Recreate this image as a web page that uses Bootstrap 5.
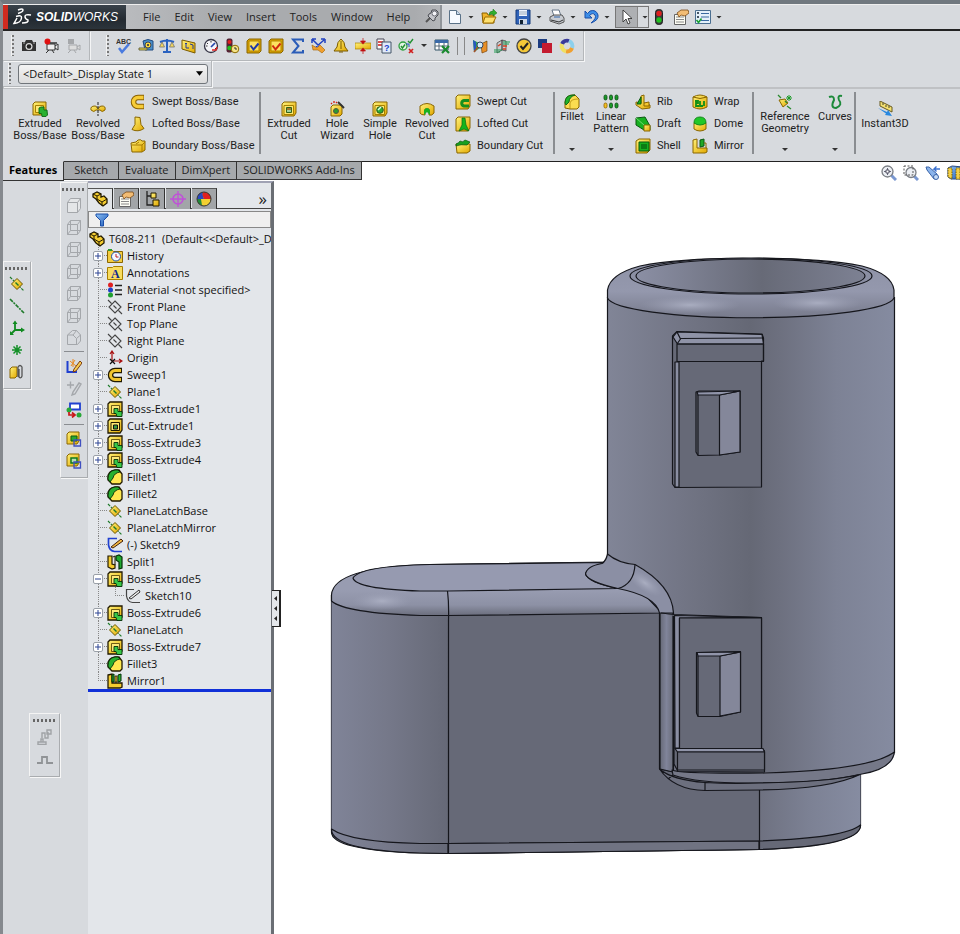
<!DOCTYPE html>
<html lang="en">
<head>
<meta charset="utf-8">
<meta name="viewport" content="width=device-width, initial-scale=1">
<title>SOLIDWORKS - T608-211</title>
<link href="https://cdn.jsdelivr.net/npm/bootstrap@5.3.0/dist/css/bootstrap.min.css" rel="stylesheet">
<style>
:root{--chrome:#d7dade;--tree:#e3e6ea;--edge:#6a6e74}
body{font-family:"Open Sans","Noto Sans",sans-serif;font-size:11px;line-height:12px;color:#222;background:var(--chrome)}
.app{border-left:3px solid #85898e;border-top:4px solid #70787f}
button{font:inherit;color:inherit;background:none;border:0;padding:0}
.ico{width:16px;height:16px;flex:none;display:block}
.caret{width:6px;height:3px;flex:none;display:block;background:#333;clip-path:polygon(0 0,100% 0,50% 100%)}
/* menu bar */
.menubar{height:27px;border-bottom:2px solid #222;border-top:1px solid #eee}
.brandbox{width:123px;border-left:5px solid #cf2b20;background:linear-gradient(#39424a,#232a31 60%,#2c343b);color:#fff;padding-left:4px;gap:4px}
.brandname{font:italic 12px "Liberation Sans",sans-serif}
.menus{width:316px;background:linear-gradient(90deg,#b9bbbe,#a9abae 30%,#a9abae 92%,#b4b6b9);padding-left:17px;gap:14px;border-right:2px solid #90959a}
.menus a{color:#222;text-decoration:none}
.quick{padding-left:5px;gap:7px}
.pair{width:27px;gap:5px}
.pick{border:1px solid #777;height:22px;width:34px;margin:0 -5px 0 -2px}
.pick .on{background:#aeb0b3;width:22px;height:20px;border-right:1px solid #888;padding-left:3px}
.quick2{gap:6px}
/* toolbars */
.strip1{height:30px}
.dock{border-right:1px solid #b4b7ba;border-bottom:1px solid #b4b7ba;box-shadow:1px 1px 0 #f4f5f6;gap:7px}
.grip{width:3px;height:21px;flex:none;background:repeating-linear-gradient(#777 0 2px,transparent 2px 4px);border-left:1px solid #f2f2f2}
.griph{width:24px;height:3px;flex:none;background:repeating-linear-gradient(90deg,#666 0 2px,transparent 2px 4px)}
.dock-a{width:87px;padding-left:8px}
.dock-b{width:494px;padding-left:16px}
.dock-c{width:209px;padding-left:5px}
.set-a{width:60px}.set-b{width:298px}.set-c{width:103px}
.vrs{gap:6px}
.vr1{width:1px;background:#888;height:18px}
.strip2{height:28px;border-bottom:2px solid #bfc1c4}
.state{width:190px;height:20px;font-size:11px;line-height:12px;padding:0 20px 0 4px;border:1px solid #70757a;border-radius:3px;appearance:none;color:#111;
 background:url("data:image/svg+xml,%3Csvg xmlns='http://www.w3.org/2000/svg' viewBox='0 0 8 5'%3E%3Cpath d='M0 0h8L4 5z'/%3E%3C/svg%3E") no-repeat right 4px center/7px 5px,linear-gradient(#f4f4f4,#dcdcdc)}
/* ribbon */
.ribbon{height:72px;padding:2px 0 0 8px;font-family:Roboto,"Open Sans",sans-serif}
.big{display:flex;flex-direction:column;align-items:center;text-align:center;height:66px;padding-top:10px;gap:1px;flex:none}
.big.hi{padding-top:3px}
.big .caret{margin-top:auto;margin-bottom:6px}
.w58{width:58px}.w48{width:48px}.w38{width:38px}.w56{width:56px}.w34{width:34px}.w44{width:44px}.w62{width:62px}
.smalls{flex:none}
.sm-boss{width:132px;padding-left:3px}.sm-cut{width:98px}.sm-a{width:58px;padding-left:2px}.sm-b{width:61px;padding-left:1px}
.smalls button{display:flex;align-items:center;height:22px;gap:6px;white-space:nowrap;text-align:left}
.rule{width:2px;height:62px;background:#8a8d91;flex:none;margin:1px 4px 0 0}
/* command tabs */
.cmdrow{height:20px;background:#fff;box-shadow:inset 0 1px 0 #222}
.cmd{height:19px;border:1px solid #333;border-left:0;background:#a6a9ac;padding:0 6px 2px;white-space:nowrap}
.cmd.wide{padding:0 10px 2px}
.cmd.active{background:var(--chrome);border-top-color:var(--chrome);font-weight:700;color:#000;height:20px}
.headsup{gap:6px;overflow:hidden;padding-top:4px}
/* work area */
.side{width:85px;flex:none}
.side1{width:57px}
.float{background:var(--chrome);border:1px solid #a9acaf;border-left-color:#f4f4f4;border-top-color:#f4f4f4;box-shadow:1px 1px 0 #f6f6f6;display:flex;flex-direction:column;align-items:center;padding-top:5px}
.f1{width:28px;height:128px;margin-top:80px;gap:6px}
.f2{width:28px;height:296px;gap:6px;margin-top:1px}
.f3{width:31px;height:64px;margin-top:324px;gap:7px}
.hr1{width:20px;height:1px;background:#8a8d91}
.treepane{width:186px;flex:none;background:var(--tree);border-right:3px solid var(--edge);border-top:2px solid #a0a2b4;padding-top:5px}
.mtabs button{width:25px;height:21px;background:#a2a5a8;border-right:1px solid #333;border-top:1px solid #555;display:flex;justify-content:center;align-items:center;margin-right:1px}
.mtabs button.on{background:var(--tree)}
.mtabs{box-shadow:inset 0 -1px 0 #444}
.more{font-size:17px}
.filter{height:17px;background:#efefef;border:1px solid #888;margin:2px 0;padding-left:5px}
.filter input{border:0;background:none;min-width:0;height:13px;outline:0;font-size:11px}
.tree{list-style:none;margin:0;padding:0}
.tree li,.rootrow{display:flex;align-items:center;height:17px;white-space:nowrap;color:#111;gap:4px;font-size:11px}
.rootrow{overflow:hidden;padding-left:1px}
.stem{width:19px;height:17px;flex:none;display:flex;align-items:center;padding-left:5px;margin-right:-4px;
 background:repeating-linear-gradient(#888 0 1px,transparent 1px 2px) 10px 0/1px 17px no-repeat,repeating-linear-gradient(90deg,#888 0 1px,transparent 1px 2px) 10px 8px/9px 1px no-repeat}
.stem.end{background-size:1px 9px,9px 1px}
.stem.pass{background-size:1px 17px,0 0}
.stem.deep{width:18px;padding:0;background-position:8px 0,8px 8px;background-size:1px 9px,10px 1px}
.exp{width:10px;height:10px;display:block;background:#fff;border:1px solid #9aa0a8;border-radius:2px;padding:0}
.exp svg{display:block;width:8px;height:8px}
.rollback{height:3px;background:#1030d8}
.viewport{background:#fff;min-width:0}
.flyout{width:9px;height:37px;margin:409px 0 0 -2px;border:1px solid #222;border-width:1px 2px 1px 0;background:var(--tree);display:flex;flex-direction:column;justify-content:space-evenly;align-items:center;flex:none}
.flyout i{width:3px;height:5px;background:#222;clip-path:polygon(100% 0,100% 100%,0 50%)}
.model{width:calc(100% + 7px);margin-left:-7px;min-width:0;display:block;align-self:flex-start;height:auto}
</style>
<script src="https://cdn.jsdelivr.net/npm/bootstrap@5.3.0/dist/js/bootstrap.bundle.min.js"></script>
</head>
<body>
<svg width="0" height="0" class="visually-hidden" aria-hidden="true">
<defs>
<linearGradient id="gy" x2="1" y2="1"><stop stop-color="#fff27a"/><stop offset="1" stop-color="#e2a800"/></linearGradient>
<linearGradient id="gb" x2="1" y2="1"><stop stop-color="#8cc0f4"/><stop offset="1" stop-color="#1c58b8"/></linearGradient>
</defs>
<symbol id="camera" viewBox="0 0 16 16"><path d="M1 4h3l1-2h6l1 2h3v9H1z" fill="#333"/><circle cx="8" cy="8.500" r="3.500" fill="#ddd"/><circle cx="8" cy="8.500" r="2.300" fill="#222"/><path d="M2 5h2M12 5h2" stroke="#aaa"/></symbol>
<symbol id="rec" viewBox="0 0 16 16"><path d="M4 6h8v6H4zM12 8l3-2v6l-3-2M6 12l-3 3M9 12l2 3" fill="#eee" stroke="#333"/><circle cx="4.500" cy="3.500" r="3" fill="#e01010"/><path d="M7 5h7" stroke="#333" stroke-width="1.500"/></symbol>
<symbol id="recoff" viewBox="0 0 16 16"><path d="M4 7h8v5H4zM12 9l3-2v5l-3-2M6 12l-3 3M9 12l2 3" fill="#ddd" stroke="#a5a7aa"/><path d="M3 1h6v5H3z" fill="#a5a7aa"/></symbol>
<symbol id="spell" viewBox="0 0 16 16"><text x="0" y="6" font-size="7" font-weight="700" font-family="Liberation Sans" fill="#333">ABC</text><path d="M3 10l3 4 7-8" fill="none" stroke="#4a7be0" stroke-width="2.500"/></symbol>
<symbol id="tape" viewBox="0 0 16 16"><path d="M5 3q5-3 10 0v9H7z" fill="#4890cc" stroke="#224a80"/><circle cx="10" cy="7" r="3" fill="#f8dc40" stroke="#445"/><circle cx="10" cy="7" r="1" fill="#225"/><path d="M1 10h8v2H1z" fill="#f8dc40" stroke="#664"/></symbol>
<symbol id="scale" viewBox="0 0 16 16"><path d="M8 1v12M1 4q7-3 14 0M4 14h8" stroke="#2a62c0" stroke-width="2" fill="none"/><path d="M3 4L0.500 9h5zM13 4l-2.500 5h5z" fill="#f5d860" stroke="#666" stroke-width=".7"/></symbol>
<symbol id="secprop" viewBox="0 0 16 16"><path d="M1 2l13 3v10L1 11z" fill="url(#gy)" stroke="#7a5a00"/><path d="M5 5v5h3M9 6l3 1v4M4 6l1-1 1 1" fill="none" stroke="#223a9c"/></symbol>
<symbol id="gauge" viewBox="0 0 16 16"><circle cx="8" cy="8" r="6.500" fill="#f4f4f8" stroke="#334" stroke-width="1.300"/><path d="M8 9l4-4" stroke="#24a" stroke-width="1.700"/><path d="M4 5l1 1M8 3v1.500M3 8h1.500M12 10l1 1" stroke="#333"/><path d="M9 12h4l1-3" stroke="#d22" fill="none" stroke-width="1.500"/></symbol>
<symbol id="traffic" viewBox="0 0 16 16"><rect x="4.500" y=".5" width="7" height="15" rx="3" fill="#3a3a3a" stroke="#222"/><circle cx="8" cy="4.500" r="2.700" fill="#e02020"/><circle cx="8" cy="11" r="2.700" fill="#20c020"/></symbol>
<symbol id="traffic2" viewBox="0 0 16 16"><rect x="2.500" y=".5" width="6" height="14" rx="2" fill="#523"/><circle cx="5.500" cy="4" r="2" fill="#e02020"/><circle cx="5.500" cy="10" r="2.300" fill="#20c020"/><circle cx="11" cy="11" r="3.800" fill="#f6e48a" stroke="#8a6a00"/><path d="M11 9v2h2" stroke="#333" fill="none"/></symbol>
<symbol id="ckblue" viewBox="0 0 16 16"><path d="M1 3l2-2h12v12l-2 2H1z" fill="#d8a000" stroke="#8a6600"/><path d="M3 3h10v10H3z" fill="#fde060" stroke="#b58800"/><path d="M4.500 7.500l3 4 5-6" fill="none" stroke="#223aa8" stroke-width="2"/></symbol>
<symbol id="ckred" viewBox="0 0 16 16"><path d="M1 3l2-2h12v12l-2 2H1z" fill="#d8a000" stroke="#8a6600"/><path d="M3 3h10v10H3z" fill="#fde060" stroke="#b58800"/><path d="M4.500 7.500l3 4 5-6" fill="none" stroke="#d02810" stroke-width="2"/></symbol>
<symbol id="sigma" viewBox="0 0 16 16"><path d="M13 4V1.500H3L8.500 8 3 14.500h10V12" fill="none" stroke="#2a5cb8" stroke-width="2"/></symbol>
<symbol id="symchk" viewBox="0 0 16 16"><path d="M2 2l10 10M13 2L5 9M1 1h4M1 1v4M14 1h-4M14 1v4" stroke="#2040c0" stroke-width="1.500" fill="none"/><path d="M1 7l5 3 3-3 5 5-3 3-4-3H2z" fill="#f0a030" stroke="#a06000" stroke-width=".6"/></symbol>
<symbol id="bell" viewBox="0 0 16 16"><path d="M8 1q4 3 4 8l3 4H1l3-4q0-5 4-8z" fill="url(#gy)" stroke="#7a5a00"/><path d="M6 14h4M8 3v8" stroke="#7a5a00"/></symbol>
<symbol id="thick" viewBox="0 0 16 16"><path d="M0 5h6l2 1 2-1h6v6h-6l-2-1-2 1H0z" fill="url(#gy)" stroke="#a88000" stroke-width=".7"/><path d="M8 0v3M5.500 3h5L8 6zM8 16v-3M5.500 13h5L8 10z" fill="#c01010" stroke="#c01010" stroke-width=".7"/></symbol>
<symbol id="cmpdoc" viewBox="0 0 16 16"><path d="M1 1h7v10H1z" fill="#fff" stroke="#445"/><path d="M2 4h5M2 7h5" stroke="#d01818" stroke-width="1.500"/><path d="M8 4h7v11H6V4z" fill="#e0eafa" stroke="#456"/><text x="8" y="13" font-size="9" font-weight="700" font-family="Liberation Sans" fill="#24c">?</text></symbol>
<symbol id="gears" viewBox="0 0 16 16"><circle cx="5" cy="8" r="4" fill="#e4f4e4" stroke="#30a040" stroke-width="1.300"/><path d="M3 8l1.500 2L7 6.500M10 3l2 2 3-4" fill="none" stroke="#209030" stroke-width="1.400"/><path d="M11 11l4 4M15 11l-4 4" stroke="#d02020" stroke-width="1.700"/><path d="M8 6h3v3" stroke="#2850c0" fill="none"/></symbol>
<symbol id="table" viewBox="0 0 16 16"><path d="M1 2h13v10H1z" fill="#fff" stroke="#356"/><path d="M1 2h13v3H1z" fill="#3a6aa8"/><path d="M1 8h13M5 5v7M10 5v7" stroke="#567"/><path d="M8 8l7 7M15 8l-7 7" stroke="#1a8a30" stroke-width="2.200"/></symbol>
<symbol id="simx" viewBox="0 0 16 16"><path d="M1 2l8 4 6-3v9l-7-2-6 4z" fill="#30a850"/><path d="M1 2l3 2v9l-2 1z" fill="#2858c0"/><path d="M9 6l6-3v10l-5 2z" fill="#e89028" stroke="#6a3800" stroke-width=".6"/><circle cx="8" cy="7" r="3" fill="#cfeaf8" stroke="#346"/><path d="M6 9l-4 5" stroke="#a52" stroke-width="1.500"/></symbol>
<symbol id="flow" viewBox="0 0 16 16"><path d="M3 5l5-3v10l-5 3zM8 2l4 1v10l-4-1z" fill="#c8ccd0" stroke="#333" stroke-width=".7"/><path d="M0 12h8M0 14h6M9 4h7M9 6h6" stroke="#1e9c50"/><path d="M4 8l3-2M9 8h4M9 11h3" stroke="#d84020" stroke-width="1.500"/></symbol>
<symbol id="yclock" viewBox="0 0 16 16"><circle cx="8" cy="8" r="7" fill="#f4c838" stroke="#444" stroke-width="1.300"/><path d="M4.500 8l2.500 3 5-6" fill="none" stroke="#222" stroke-width="2"/></symbol>
<symbol id="squares" viewBox="0 0 16 16"><path d="M1 1h9v9H1z" fill="#1c3c80"/><path d="M5 5h10v10H5z" fill="#c41c30"/></symbol>
<symbol id="ring" viewBox="0 0 16 16"><g fill="none" stroke-width="4"><path d="M3 6a5.500 5.500 0 0 1 7-3" stroke="#3a3a9a"/><path d="M10 3a5.500 5.500 0 0 1 3 7" stroke="#8cd0ec"/><path d="M13 10a5.500 5.500 0 0 1-6 3.300" stroke="#f0a030"/><path d="M7 13.300A5.500 5.500 0 0 1 3 6" stroke="#f0e060"/></g></symbol>
<symbol id="pin" viewBox="0 0 16 16"><path d="M2 13l4-4" stroke="#555" stroke-width="2"/><path d="M4 7l5 5 2-1v-2l3-3V3l-2-2H8L7 4 5 5z" fill="#c4c5ca" stroke="#4a4c52"/><circle cx="10.500" cy="4.500" r="2.500" fill="#f2f2f6" stroke="#6a6c74"/></symbol>
<symbol id="newdoc" viewBox="0 0 16 16"><path d="M2.500 1.500h7l4 4v9h-11z" fill="#f6faff" stroke="#5a7288"/><path d="M9.500 1.500v4h4" fill="#c8daee" stroke="#5a7288"/></symbol>
<symbol id="open" viewBox="0 0 16 16"><path d="M1 4h5l1 2h6v8H2z" fill="#f0b428" stroke="#8a6000"/><path d="M4 8h11l-3 6H2z" fill="#fde070" stroke="#a07000"/><path d="M8 6q0-4 4-4V0l4 4-4 3V5q-2 0-4 1z" fill="#30b030" stroke="#187018" stroke-width=".5"/></symbol>
<symbol id="save" viewBox="0 0 16 16"><path d="M1 1h14v14H1z" fill="#2f62b8" stroke="#153a7a"/><path d="M4 1h8v6H4z" fill="#eef4ff"/><path d="M4 3h8M4 5h8" stroke="#9ab"/><path d="M4 10h8v5H4z" fill="#cdd8e8"/><path d="M5 11h3v4H5z" fill="#123"/></symbol>
<symbol id="print" viewBox="0 0 16 16"><path d="M3 1h7l2 6H5z" fill="#fff" stroke="#678"/><path d="M1 8l4-2h8l2 3v4l-5 2-9-3z" fill="#c8ccd2" stroke="#555"/><path d="M2 11l8 2 4-2" fill="none" stroke="#333"/><path d="M5 8h6" stroke="#36a"/></symbol>
<symbol id="undo" viewBox="0 0 16 16"><path d="M2 2v7h7L6.500 6.500Q10 3 12 6t-4 8q8-3 7-8-2-6-8-4L4.500 4.500z" fill="#3c8ee8" stroke="#1a4ea8"/></symbol>
<symbol id="cursor" viewBox="0 0 16 16"><path d="M4 1v12l3-3 2 5 2-1-2-4.500h4z" fill="#fff" stroke="#333" stroke-width=".9"/></symbol>
<symbol id="props" viewBox="0 0 16 16"><path d="M1.500 5.500h11v10h-11z" fill="#fdfdf4" stroke="#666"/><path d="M3 8h8M3 10.500h8M3 13h8" stroke="#8a8a8a"/><path d="M4 4l4-3h7l1 3-4 3-4-1-2 2z" fill="#f2bc74" stroke="#7a4a18" stroke-width=".8"/></symbol>
<symbol id="opts" viewBox="0 0 16 16"><path d="M.5 1.500h15v13H.5z" fill="#e4f0fa" stroke="#4a6e90"/><path d="M6 4.500h8M6 8h8M6 11.500h8" stroke="#3a6aa0"/><path d="M2 4h2M2 8h2" stroke="#456" stroke-width="2"/><path d="M1.500 11l2 2.500 3-4" fill="none" stroke="#18a030" stroke-width="1.600"/></symbol>
<symbol id="extr" viewBox="0 0 16 16"><path d="M1 3l2-2h11v10l-2 3H1z" fill="url(#gy)" stroke="#8a6600"/><path d="M3.500 4.500h8v7h-8z" fill="#fbe878" stroke="#a88000"/><path d="M7 7l2-1h3v3h3l.500 5-1.500 1.500h-4l-.5-3H7z" fill="#28b030" stroke="#0c6414" stroke-width=".9"/></symbol>
<symbol id="textr" viewBox="0 0 16 16"><path d="M1 3l2-2h12v11l-2 3H1z" fill="url(#gy)" stroke="#221a00" stroke-width="1.300"/><path d="M4.500 4.500h8v8h-8z" fill="#fbe878" stroke="#4a3a00" stroke-width=".8"/><path d="M7 7.500h4v3h4v5h-5l-1-3H7z" fill="#38c848" stroke="#053008" stroke-width=".9"/></symbol>
<symbol id="cutx" viewBox="0 0 16 16"><path d="M1 3l2-2h12v11l-2 3H1z" fill="url(#gy)" stroke="#8a6600"/><path d="M3 4.500h9.500v9H3z" fill="#fde870" stroke="#a88000"/><path d="M5.500 6.500h5v5h-5z" fill="#a07828" stroke="#30641c"/><path d="M6 9h4v2H6z" fill="#9fcf9a"/></symbol>
<symbol id="tcut" viewBox="0 0 16 16"><path d="M1 3l2-2h12v11l-2 3H1z" fill="url(#gy)" stroke="#221a00" stroke-width="1.300"/><path d="M4 4.500h8.500v8H4z" fill="#fde870" stroke="#221a00"/><path d="M6.500 7h4v4h-4z" fill="#3a9a40" stroke="#111"/></symbol>
<symbol id="revb" viewBox="0 0 16 16"><path d="M1 9q-1-4 4-4 2 0 2 2h2q0-2 3-2 4 0 3 4-3 3-5 0H6Q4 12 1 9z" fill="url(#gy)" stroke="#8a6600"/><path d="M8 1v14" stroke="#222" stroke-dasharray="3 1"/></symbol>
<symbol id="swept" viewBox="0 0 16 16"><path d="M14 3.500H8a4.500 4.500 0 0 0 0 9h6" fill="none" stroke="#8a6000" stroke-width="5.500"/><path d="M13.500 3.500H8a4.500 4.500 0 0 0 0 9h5.500" fill="none" stroke="#f6cc38" stroke-width="3.500"/></symbol>
<symbol id="tsweep" viewBox="0 0 16 16"><path d="M15 3.500H8a4.500 4.500 0 0 0 0 9h7" fill="none" stroke="#221a00" stroke-width="5.500"/><path d="M14 3.500H8a4.500 4.500 0 0 0 0 9h6" fill="none" stroke="#f0c430" stroke-width="3"/></symbol>
<symbol id="loft" viewBox="0 0 16 16"><path d="M5 1l5 .500 1 7 3 4q-6 4-12 1l3-5z" fill="url(#gy)" stroke="#8a6600"/></symbol>
<symbol id="bound" viewBox="0 0 16 16"><path d="M1 5l5-1 2-2q3-1 4 1h3v9l-3 2H2z" fill="url(#gy)" stroke="#8a6600"/><path d="M2 7h10v7M12 7l3-3M6 6l3-2" fill="none" stroke="#a87c00"/></symbol>
<symbol id="wiz" viewBox="0 0 16 16"><path d="M2 6l2-2h9v9l-2 2H2z" fill="url(#gy)" stroke="#8a6600"/><circle cx="7" cy="10" r="2.500" fill="#2a9a30" stroke="#554"/><path d="M9 1l6 6" stroke="#333" stroke-width="2"/><path d="M2 2l1 1M5 0v2M7 2l1-1" stroke="#d82010" stroke-width="1.300"/></symbol>
<symbol id="hole" viewBox="0 0 16 16"><path d="M1 3l2-2h12v11l-2 3H1z" fill="url(#gy)" stroke="#8a6600"/><path d="M3 4.500h9.500v9H3z" fill="#fde870" stroke="#a88000"/><circle cx="8" cy="9" r="3.300" fill="#2cae34" stroke="#2a5a20"/><path d="M6 9l3-3" stroke="#dfe" stroke-width="1.500"/></symbol>
<symbol id="revc" viewBox="0 0 16 16"><path d="M1 5q7-5 14 0v7q-2 3-5 2V8H6v6q-4 0-5-2z" fill="url(#gy)" stroke="#8a6600"/><path d="M5 14V9q3-4 6 0v5l-3-3z" fill="#18b020"/></symbol>
<symbol id="swc" viewBox="0 0 16 16"><path d="M1 3l2-2h12v11l-2 3H1z" fill="url(#gy)" stroke="#8a6600"/><path d="M14 6.500H9a2.800 2.800 0 0 0 0 5.500h5" fill="none" stroke="#16901e" stroke-width="3"/></symbol>
<symbol id="loc" viewBox="0 0 16 16"><path d="M1 3l2-2h12v11l-2 3H1z" fill="url(#gy)" stroke="#8a6600"/><path d="M7 2h3l1 7 3 6-5-2-5 2 3-6z" fill="#14b41c" stroke="#086a10" stroke-width=".7"/></symbol>
<symbol id="boc" viewBox="0 0 16 16"><path d="M1 6h14v7l-3 2H2z" fill="url(#gy)" stroke="#8a6600"/><path d="M1 6q3-1 4-3 3 2 5-1l5 2-3 3q-6-1-11 1z" fill="#18a020" stroke="#0c5a10" stroke-width=".7"/></symbol>
<symbol id="fil" viewBox="0 0 16 16"><path d="M1 14V8Q2 1 9 1h2l4 4v8l-2 2H6z" fill="#fbdc50" stroke="#8a6600"/><path d="M1 9Q1 1 9 1h2q-6 2-6 7l-3 3z" fill="#20b428" stroke="#126818"/><path d="M6 9v6M6 9q1-4 8-4" fill="none" stroke="#a88000" stroke-width=".7"/></symbol>
<symbol id="tfil" viewBox="0 0 16 16"><path d="M1 11Q0 2 8 1h4l3 4v8l-2 2H5z" fill="#ffe850" stroke="#221a00" stroke-width="1.300"/><path d="M1 10Q1 2 8 1h3l2 2q-6 1-7 6l-3 4z" fill="#28b030" stroke="#053008" stroke-width=".9"/></symbol>
<symbol id="lin" viewBox="0 0 16 16"><g fill="#1a9a28" stroke="#0d4a14" stroke-width=".8"><rect x="1" y="1" width="3" height="5" rx="1.500"/><rect x="6.500" y="1" width="3" height="5" rx="1.500"/><rect x="12" y="1" width="3" height="5" rx="1.500"/><rect x="6.500" y="9" width="3" height="5" rx="1.500"/><rect x="12" y="9" width="3" height="5" rx="1.500"/></g><rect x="1" y="9" width="3" height="5" rx="1.500" fill="#f4c020" stroke="#8a6000" stroke-width=".8"/></symbol>
<symbol id="rib" viewBox="0 0 16 16"><path d="M6 2l3-1v8l6 2v3l-8 1-6-4v-3l5 1z" fill="url(#gy)" stroke="#8a6600"/><path d="M6 3v7H2z" fill="#18b020" stroke="#0a5a10"/><path d="M9 9l5-1v4H9z" fill="#f6c830" stroke="#8a6600"/></symbol>
<symbol id="draft" viewBox="0 0 16 16"><path d="M1 2l9-1 5 9v4H9L1 9z" fill="#18b020" stroke="#0a5a10"/><path d="M9 9h6v6H9z" fill="url(#gy)" stroke="#8a6600"/><path d="M1 2l8 7" stroke="#6fdc70"/></symbol>
<symbol id="shell" viewBox="0 0 16 16"><path d="M1 3l3-2h11v11l-3 3H1z" fill="url(#gy)" stroke="#8a6600"/><path d="M4 4h10v9H4z" fill="#18b020" stroke="#0a5a10"/><path d="M6 6h6v5H6z" fill="#0c7c14"/></symbol>
<symbol id="wrap" viewBox="0 0 16 16"><path d="M1 3q7-4 14 0v10q-7 4-14 0z" fill="url(#gy)" stroke="#8a6600"/><path d="M1 3q7 3 14 0" fill="none" stroke="#8a6600"/><path d="M3 7h3v2H4v3h3M8 7v5h3M12 7v5" fill="none" stroke="#109018" stroke-width="1.800"/></symbol>
<symbol id="dome" viewBox="0 0 16 16"><path d="M2 7v6q6 4 12 0V7z" fill="url(#gy)" stroke="#8a6600"/><path d="M2 7q0-6 6-6t6 6q-6 4-12 0z" fill="#20c828" stroke="#128a18"/></symbol>
<symbol id="mir" viewBox="0 0 16 16"><path d="M1 2l4-1v9h10v4l-2 1H1z" fill="url(#gy)" stroke="#8a6600"/><path d="M8 2l4-1v7l-4 1z" fill="#20a828" stroke="#0a5a10"/><path d="M12 5h2v5" fill="none" stroke="#8a6600"/></symbol>
<symbol id="tmir" viewBox="0 0 16 16"><path d="M1 2l4-1v9h10v4l-2 1H1z" fill="#f4cc30" stroke="#221a00" stroke-width="1.300"/><path d="M5 2l2-1v8H5zM11 2l3-1v7l-3 1z" fill="#28b030" stroke="#053008"/><path d="M8 3h2v6H8z" fill="#f4cc30" stroke="#221a00" stroke-width=".8"/></symbol>
<symbol id="refg" viewBox="0 0 16 16"><path d="M2 6l6-1 3 4-5 4z" fill="url(#gy)" stroke="#8a6600"/><path d="M1 1l3 3M10 12l4 3M8 7l2 2" stroke="#2a8a30" stroke-width="1.300"/><path d="M12 1v6M9 4h6M10 2l4 4M14 2l-4 4" stroke="#1a9a28"/></symbol>
<symbol id="curv" viewBox="0 0 16 16"><path d="M2 3q5-2 5 3-4 8 2 8 7-3 3-8-2-5 3-4" fill="none" stroke="#1c8a3a" stroke-width="2"/></symbol>
<symbol id="inst" viewBox="0 0 16 16"><path d="M3 0l12 6v5L3 5z" fill="#f4e070" stroke="#665a20"/><path d="M6 2v2M9 4v2M12 5v2" stroke="#443"/><path d="M1 7l9 4 1-2 4 6-7-1 1-1.500z" fill="#2888e0"/></symbol>
<symbol id="zfit" viewBox="0 0 16 16"><path d="M10 10l5 5" stroke="#7a98d0" stroke-width="3"/><circle cx="6.500" cy="6.500" r="5.500" fill="#eceff4" stroke="#7a7e84" stroke-width="1.300"/><path d="M6.500 3v7M3 6.500h7" stroke="#667"/><path d="M5 5h3v3H5z" fill="#fff" stroke="#556"/></symbol>
<symbol id="zarea" viewBox="0 0 16 16"><path d="M11 11l4 4" stroke="#7a98d0" stroke-width="3"/><circle cx="8" cy="7.500" r="5" fill="#eceff4" stroke="#7a7e84" stroke-width="1.300"/><path d="M1 1h9v9H1z" fill="none" stroke="#555" stroke-dasharray="2 1.500"/></symbol>
<symbol id="zprev" viewBox="0 0 16 16"><path d="M1 2h3l8 7v4l-3 1L2 5z" fill="#8ab4ec" stroke="#3a64a8"/><circle cx="11" cy="12" r="2.500" fill="#c6dcf8" stroke="#3a64a8"/><path d="M15 4H9l2.500-2.500M9 4l2.500 2.500" stroke="#3870d0" fill="none" stroke-width="1.400"/></symbol>
<symbol id="sect" viewBox="0 0 16 16"><path d="M1 3l4-2 11 1v12H4l-3-2z" fill="url(#gb)" stroke="#2a4a80"/><path d="M1 3h4v11l-4-2zM9 3h4v11H9z" fill="#f4d048" stroke="#7a6000" stroke-dasharray="1.500 1"/></symbol>
<symbol id="plane" viewBox="0 0 16 16"><path d="M1 1l14 14" stroke="#1e7a2a" stroke-width="1.200" stroke-dasharray="3 1"/><path d="M8 2.500L13.500 8 8 13.500 2.500 8z" fill="url(#gy)" stroke="#6a5400"/><path d="M6.500 6.500l3 3" stroke="#1e7a2a" stroke-width="1.400"/></symbol>
<symbol id="dplane" viewBox="0 0 16 16"><path d="M1 1l3.500 3.500M11.500 11.500l3.500 3.500M6.500 6.500l3 3M8 2l6 6-6 6-6-6z" fill="none" stroke="#444" stroke-width="1.100"/></symbol>
<symbol id="axis" viewBox="0 0 16 16"><path d="M1 1l14 14" stroke="#1e7a2a" stroke-width="1.600" stroke-dasharray="4 1 2 1"/></symbol>
<symbol id="csys" viewBox="0 0 16 16"><path d="M6 2v8h8M6 10l-4 4" fill="none" stroke="#108a20" stroke-width="1.800"/><path d="M3.500 4L6 .5 8.500 4zM12 7.500l4 2.500-4 2.500zM1 11v4h4z" fill="#108a20"/></symbol>
<symbol id="point" viewBox="0 0 16 16"><path d="M8 3v10M3 8h10M4.500 4.500l7 7M11.500 4.500l-7 7" stroke="#149028" stroke-width="1.500"/></symbol>
<symbol id="mate" viewBox="0 0 16 16"><path d="M1 5l2-2h5v9l-2 2H1z" fill="url(#gy)" stroke="#8a6600"/><path d="M9 13V3q2-3 4 0v9q-1 3-3 1V5" fill="none" stroke="#555" stroke-width="1.300"/></symbol>
<symbol id="cube" viewBox="0 0 16 16"><path d="M1.500 5.500h10v10h-10zM4.500 1.500h10v10h-10zM1.500 5.500l3-4M11.500 5.500l3-4M1.500 15.500l3-4M11.500 15.500l3-4" fill="none" stroke="#a4a7ab"/></symbol>
<symbol id="cube0" viewBox="0 0 16 16"><path d="M1.500 5.500l3-4h10v10l-3 4h-10zM1.500 5.500h10v10M11.500 5.500l3-4" fill="#e4e6e8" stroke="#a4a7ab"/></symbol>
<symbol id="cubei" viewBox="0 0 16 16"><path d="M1.500 6l5-4.500h4L14.500 6v6l-3 3.500h-10zM1.500 6H7l3.500 3.500v6M7 6l3.500-4.500M10.500 9.500L14.500 6" fill="none" stroke="#a4a7ab"/></symbol>
<symbol id="sketch" viewBox="0 0 16 16"><path d="M1.500 3v11H11" fill="none" stroke="#2040d0" stroke-width="2"/><path d="M4 3l6 5M9 2l-4 6M7 1v8" stroke="#e88820"/><path d="M14 3l2 2-6 8-3 1 1-3z" fill="#f8cc50" stroke="#7a3a10"/></symbol>
<symbol id="skoff" viewBox="0 0 16 16"><path d="M1 5h7M4.500 1.500v7M13 3l2 1-6 10-3 1 1-3z" fill="none" stroke="#a4a7ab" stroke-width="1.400"/></symbol>
<symbol id="conv" viewBox="0 0 16 16"><path d="M4 1.500h10v6H4z" fill="#fff" stroke="#2040d0" stroke-width="1.800"/><circle cx="3" cy="8" r="2.500" fill="#28a838"/><circle cx="13" cy="13" r="2.500" fill="#28a838"/><path d="M3 10v3h5M6 10.500l3 2.500-3 2.500" fill="none" stroke="#c81818" stroke-width="1.700"/></symbol>
<symbol id="bs1" viewBox="0 0 16 16"><path d="M1 3l2-2h10v9l-2 3H1z" fill="url(#gy)" stroke="#8a6600"/><path d="M5 5h6v5H5z" fill="#28a830" stroke="#0c5a10"/><path d="M8 9h6.500v6H8z" fill="none" stroke="#4050c0" stroke-width="1.300"/></symbol>
<symbol id="bs2" viewBox="0 0 16 16"><path d="M1 3l2-2h10v9l-2 3H1z" fill="url(#gy)" stroke="#8a6600"/><path d="M5 5h6v5H5z" fill="#b8e0b0" stroke="#0c7a20" stroke-width="1.500"/><path d="M8 9h6.500v6H8z" fill="none" stroke="#4050c0" stroke-width="1.300"/></symbol>
<symbol id="part" viewBox="0 0 16 16"><path d="M1 3l4-2 4 2v3l3-1 3 3v4l-4 3-4-3-3-4-3-2z" fill="#f4cc30" stroke="#221a00" stroke-width="1.300"/><path d="M1 3l4 2 4-2M5 5v3l5 3 5-3M10 11v4" fill="none" stroke="#221a00"/></symbol>
<symbol id="cfg" viewBox="0 0 16 16"><path d="M3 0v14h6M3 5h4" fill="none" stroke="#222" stroke-width="1.300"/><path d="M7 2h5v5H7zM9 9h6v6H9z" fill="url(#gy)" stroke="#221a00"/></symbol>
<symbol id="target" viewBox="0 0 16 16"><circle cx="8" cy="8" r="5" fill="none" stroke="#c050d8" stroke-width="1.600"/><path d="M8 0v16M0 8h16" stroke="#c050d8" stroke-width="1.300"/></symbol>
<symbol id="ball" viewBox="0 0 16 16"><circle cx="8" cy="8" r="7" fill="#f4d030"/><path d="M8 8L1 8a7 7 0 0 1 6-7q-1 3 1 7z" fill="#2848c0"/><path d="M8 8Q5 2 8 1a7 7 0 0 1 7 7z" fill="#e02020"/><path d="M1 8h4l1 6.500A7 7 0 0 1 1 8z" fill="#208a38"/><circle cx="8" cy="8" r="7" fill="none" stroke="#333"/></symbol>
<symbol id="funnel" viewBox="0 0 16 16"><path d="M2 2h12v2l-4.500 4.500V14h-3V8.500L2 4z" fill="url(#gb)" stroke="#1a4ea8"/></symbol>
<symbol id="hist" viewBox="0 0 16 16"><path d="M.5 2.500h5l1 1h9v11H.5z" fill="#f4cc40" stroke="#8a6600"/><path d="M1 2h4" stroke="#2a9a30" stroke-width="2"/><circle cx="9" cy="8.500" r="4.500" fill="#f4f6ff" stroke="#2050a0"/><path d="M9 6v3h2.500" stroke="#c02020" fill="none"/></symbol>
<symbol id="anno" viewBox="0 0 16 16"><path d="M.5 2.500h5l1-1h9v13H.5z" fill="#f8dc60" stroke="#a88000"/><text x="4" y="13" font-size="12" font-weight="700" font-family="Liberation Serif" fill="#102a90">A</text></symbol>
<symbol id="mat" viewBox="0 0 16 16"><circle cx="3.500" cy="3" r="2.500" fill="#e02020"/><circle cx="3.500" cy="8" r="2.500" fill="#2040c8"/><circle cx="3.500" cy="13" r="2.500" fill="#20a030"/><path d="M8 3.500h7M8 8h7M8 12.500h7" stroke="#222" stroke-width="1.500"/></symbol>
<symbol id="orig" viewBox="0 0 16 16"><path d="M5 2v9h9M3 4l2-3 2 3M12 9l3 2-3 2" fill="none" stroke="#a81010" stroke-width="1.200"/><path d="M3 9l5 5M8 9l-5 5" stroke="#111" stroke-width="1.200"/></symbol>
<symbol id="tsk" viewBox="0 0 16 16"><path d="M10 1.500H1.500V8q1 6 6 6.500H15" fill="none" stroke="#2040d0" stroke-width="1.700"/><path d="M4 10L14 2l2 2L6 11z" fill="#f4b840" stroke="#42200a"/></symbol>
<symbol id="tsk2" viewBox="0 0 16 16"><path d="M9 1.500H1.500V8q1 6 6 6.500H15" fill="none" stroke="#444" stroke-width="1.200"/><path d="M4 10L14 2l1 2L6 11z" fill="#eee" stroke="#333"/></symbol>
<symbol id="split" viewBox="0 0 16 16"><path d="M1 2h4v8l3 1v3l-3 1-4-2z" fill="#f4cc30" stroke="#221a00" stroke-width="1.200"/><path d="M6 3l2-1v9" fill="none" stroke="#221a00"/><path d="M9 2l3-1 3 2v11l-3 1V8L9 6z" fill="#20a830" stroke="#053008" stroke-width="1.200"/></symbol>
<symbol id="ssA" viewBox="0 0 16 16"><path d="M5 9V4h3v5h3V3M10 1h4v4h-4zM1 13h8v2.500H1zM4 13v-3h2v3" fill="none" stroke="#a0a3a6" stroke-width="1.400"/></symbol>
<symbol id="ssB" viewBox="0 0 16 16"><path d="M0 11h5V5h5v6h6" fill="none" stroke="#909396" stroke-width="1.800"/></symbol>
<symbol id="plus" viewBox="0 0 8 8"><path d="M1 4h6M4 1v6" stroke="#2c4494"/></symbol>
<symbol id="minus" viewBox="0 0 8 8"><path d="M1 4h6" stroke="#2c4494"/></symbol>
</svg>

<div class="app d-flex flex-column min-vh-100">
<header class="menubar d-flex">
 <div class="brandbox d-flex align-items-center flex-shrink-0">
  <svg width="20" height="20" viewBox="0 0 20 20" fill="none" stroke="#fff" stroke-width="1.500" aria-hidden="true"><path d="M6 3q5-2 5 0 0 2-5 3.500M4 9.500q6-2 5.500 1.500Q9 16 2 16.500L5 11M19 8q-6-1-6 1.500t3 3.500q1 3-6 3"/></svg>
  <span class="brandname"><b>SOLID</b>WORKS</span>
 </div>
 <nav class="menus d-flex align-items-center flex-shrink-0" aria-label="Main menu">
  <a href="#">File</a><a href="#">Edit</a><a href="#">View</a><a href="#">Insert</a><a href="#">Tools</a><a href="#">Window</a><a href="#">Help</a>
  <button aria-label="Pin menu"><svg class="ico"><use href="#pin"/></svg></button>
 </nav>
 <div class="quick d-flex align-items-center">
  <button class="pair d-flex align-items-center" aria-label="New"><svg class="ico"><use href="#newdoc"/></svg><i class="caret"></i></button>
  <button class="pair d-flex align-items-center" aria-label="Open"><svg class="ico"><use href="#open"/></svg><i class="caret"></i></button>
  <button class="pair d-flex align-items-center" aria-label="Save"><svg class="ico"><use href="#save"/></svg><i class="caret"></i></button>
  <button class="pair d-flex align-items-center" aria-label="Print"><svg class="ico"><use href="#print"/></svg><i class="caret"></i></button>
  <button class="pair d-flex align-items-center" aria-label="Undo"><svg class="ico"><use href="#undo"/></svg><i class="caret"></i></button>
  <button class="pick d-flex align-items-center flex-shrink-0" aria-label="Select"><span class="on d-flex align-items-center me-1"><svg class="ico"><use href="#cursor"/></svg></span><i class="caret"></i></button>
  <div class="quick2 d-flex align-items-center">
  <button aria-label="Rebuild"><svg class="ico"><use href="#traffic"/></svg></button>
  <button aria-label="File properties"><svg class="ico"><use href="#props"/></svg></button>
  <button class="pair d-flex align-items-center" aria-label="Options"><svg class="ico"><use href="#opts"/></svg><i class="caret"></i></button>
  </div>
 </div>
</header>

<div class="strip1 d-flex">
 <div class="dock dock-a d-flex align-items-center">
  <span class="grip"></span>
  <div class="set-a d-flex justify-content-between">
  <button aria-label="Screen capture"><svg class="ico"><use href="#camera"/></svg></button><button aria-label="Record video"><svg class="ico"><use href="#rec"/></svg></button><button aria-label="Stop recording" disabled><svg class="ico"><use href="#recoff"/></svg></button></div>
 </div>
 <div class="dock dock-b d-flex align-items-center">
  <span class="grip"></span>
  <div class="set-b d-flex justify-content-between">
  <button aria-label="Spell check"><svg class="ico"><use href="#spell"/></svg></button><button aria-label="Measure"><svg class="ico"><use href="#tape"/></svg></button><button aria-label="Mass properties"><svg class="ico"><use href="#scale"/></svg></button><button aria-label="Section properties"><svg class="ico"><use href="#secprop"/></svg></button><button aria-label="Sensor"><svg class="ico"><use href="#gauge"/></svg></button><button aria-label="Performance evaluation"><svg class="ico"><use href="#traffic2"/></svg></button><button aria-label="Check"><svg class="ico"><use href="#ckblue"/></svg></button><button aria-label="Check document"><svg class="ico"><use href="#ckred"/></svg></button><button aria-label="Equations"><svg class="ico"><use href="#sigma"/></svg></button><button aria-label="Symmetry check"><svg class="ico"><use href="#symchk"/></svg></button><button aria-label="Draft analysis"><svg class="ico"><use href="#bell"/></svg></button><button aria-label="Thickness analysis"><svg class="ico"><use href="#thick"/></svg></button><button aria-label="Compare documents"><svg class="ico"><use href="#cmpdoc"/></svg></button><button aria-label="Design check"><svg class="ico"><use href="#gears"/></svg></button></div>
  <i class="caret"></i>
  <button aria-label="Design table"><svg class="ico"><use href="#table"/></svg></button>
  <div class="vrs d-flex"><span class="vr1"></span><span class="vr1"></span></div>
  <div class="set-c d-flex justify-content-between">
  <button aria-label="SimulationXpress"><svg class="ico"><use href="#simx"/></svg></button><button aria-label="FloXpress"><svg class="ico"><use href="#flow"/></svg></button><button aria-label="DFMXpress"><svg class="ico"><use href="#yclock"/></svg></button><button aria-label="DriveWorksXpress"><svg class="ico"><use href="#squares"/></svg></button><button aria-label="SustainabilityXpress"><svg class="ico"><use href="#ring"/></svg></button></div>
 </div>
</div>

<div class="strip2 d-flex">
 <div class="dock dock-c d-flex align-items-center">
  <span class="grip"></span>
  <select class="state" aria-label="Display state"><option>&lt;Default&gt;_Display State 1</option></select>
 </div>
</div>

<section class="ribbon d-flex" aria-label="Features ribbon">
 <button class="big w58"><svg class="ico"><use href="#extr"/></svg>Extruded<br>Boss/Base</button>
 <button class="big w58"><svg class="ico"><use href="#revb"/></svg>Revolved<br>Boss/Base</button>
 <div class="smalls sm-boss">
  <button><svg class="ico"><use href="#swept"/></svg>Swept Boss/Base</button>
  <button><svg class="ico"><use href="#loft"/></svg>Lofted Boss/Base</button>
  <button><svg class="ico"><use href="#bound"/></svg>Boundary Boss/Base</button>
 </div>
 <span class="rule"></span>
 <button class="big w48"><svg class="ico"><use href="#cutx"/></svg>Extruded<br>Cut</button>
 <button class="big w48"><svg class="ico"><use href="#wiz"/></svg>Hole<br>Wizard</button>
 <button class="big w38"><svg class="ico"><use href="#hole"/></svg>Simple<br>Hole</button>
 <button class="big w56"><svg class="ico"><use href="#revc"/></svg>Revolved<br>Cut</button>
 <div class="smalls sm-cut">
  <button><svg class="ico"><use href="#swc"/></svg>Swept Cut</button>
  <button><svg class="ico"><use href="#loc"/></svg>Lofted Cut</button>
  <button><svg class="ico"><use href="#boc"/></svg>Boundary Cut</button>
 </div>
 <span class="rule me-0"></span>
 <button class="big hi w34"><svg class="ico"><use href="#fil"/></svg>Fillet<i class="caret"></i></button>
 <button class="big hi w44"><svg class="ico"><use href="#lin"/></svg>Linear<br>Pattern<i class="caret"></i></button>
 <div class="smalls sm-a">
  <button><svg class="ico"><use href="#rib"/></svg>Rib</button>
  <button><svg class="ico"><use href="#draft"/></svg>Draft</button>
  <button><svg class="ico"><use href="#shell"/></svg>Shell</button>
 </div>
 <div class="smalls sm-b">
  <button><svg class="ico"><use href="#wrap"/></svg>Wrap</button>
  <button><svg class="ico"><use href="#dome"/></svg>Dome</button>
  <button><svg class="ico"><use href="#mir"/></svg>Mirror</button>
 </div>
 <span class="rule me-0"></span>
 <button class="big hi w62"><svg class="ico"><use href="#refg"/></svg>Reference<br>Geometry<i class="caret"></i></button>
 <button class="big hi w38"><svg class="ico"><use href="#curv"/></svg>Curves<i class="caret"></i></button>
 <span class="rule me-0"></span>
 <button class="big w58"><svg class="ico"><use href="#inst"/></svg>Instant3D</button>
</section>

<div class="cmdrow d-flex flex-shrink-0" role="tablist">
 <button class="cmd active" role="tab">Features</button><button class="cmd wide" role="tab">Sketch</button><button class="cmd" role="tab">Evaluate</button><button class="cmd" role="tab">DimXpert</button><button class="cmd" role="tab">SOLIDWORKS Add-Ins</button>
 <div class="headsup d-flex ms-auto">
  <button aria-label="Zoom to fit"><svg class="ico"><use href="#zfit"/></svg></button><button aria-label="Zoom to area"><svg class="ico"><use href="#zarea"/></svg></button><button aria-label="Previous view"><svg class="ico"><use href="#zprev"/></svg></button><button aria-label="Section view"><svg class="ico" style="width:13px" viewBox="0 0 13 16"><use href="#sect" width="16" height="16"/></svg></button>
 </div>
</div>

<main class="d-flex flex-grow-1">
 <aside class="side d-flex">
  <div class="side1 d-flex flex-column">
   <div class="float f1"><span class="griph"></span>
    <button aria-label="Plane"><svg class="ico"><use href="#plane"/></svg></button><button aria-label="Axis"><svg class="ico"><use href="#axis"/></svg></button><button aria-label="Coordinate system"><svg class="ico"><use href="#csys"/></svg></button><button aria-label="Point"><svg class="ico"><use href="#point"/></svg></button><button aria-label="Mate reference"><svg class="ico"><use href="#mate"/></svg></button>
   </div>
   <div class="float f3 align-self-end"><span class="griph"></span>
    <button aria-label="Rapid sketch" disabled><svg class="ico"><use href="#ssA"/></svg></button><button aria-label="Step" disabled><svg class="ico"><use href="#ssB"/></svg></button>
   </div>
  </div>
  <div class="float f2"><span class="griph"></span>
   <button aria-label="Front view"><svg class="ico"><use href="#cube0"/></svg></button><button aria-label="Back view"><svg class="ico"><use href="#cube"/></svg></button><button aria-label="Left view"><svg class="ico"><use href="#cube"/></svg></button><button aria-label="Right view"><svg class="ico"><use href="#cube"/></svg></button><button aria-label="Top view"><svg class="ico"><use href="#cube"/></svg></button><button aria-label="Bottom view"><svg class="ico"><use href="#cube"/></svg></button><button aria-label="Isometric view"><svg class="ico"><use href="#cubei"/></svg></button>
   <span class="hr1"></span>
   <button aria-label="Sketch"><svg class="ico"><use href="#sketch"/></svg></button><button aria-label="Add sketch" disabled><svg class="ico"><use href="#skoff"/></svg></button><button aria-label="Convert entities"><svg class="ico"><use href="#conv"/></svg></button>
   <span class="hr1"></span>
   <button aria-label="Extrude boss"><svg class="ico"><use href="#bs1"/></svg></button><button aria-label="Extrude cut"><svg class="ico"><use href="#bs2"/></svg></button>
  </div>
 </aside>

 <aside class="treepane d-flex flex-column">
  <div class="mtabs d-flex align-items-center">
   <button class="on" aria-label="Feature tree"><svg class="ico"><use href="#part"/></svg></button><button aria-label="Property manager"><svg class="ico"><use href="#props"/></svg></button><button aria-label="Configurations"><svg class="ico"><use href="#cfg"/></svg></button><button aria-label="DimXpert manager"><svg class="ico"><use href="#target"/></svg></button><button aria-label="Display manager"><svg class="ico"><use href="#ball"/></svg></button>
   <span class="more ms-auto me-1">»</span>
  </div>
  <label class="filter d-flex align-items-center"><svg class="ico"><use href="#funnel"/></svg><input type="text" class="flex-grow-1" aria-label="Filter features"></label>
  <div class="rootrow"><svg class="ico"><use href="#part"/></svg><span>T608-211&nbsp; (Default&lt;&lt;Default&gt;_D</span></div>
  <ul class="tree">
   <li><span class="stem"><button class="exp" aria-label="Expand"><svg><use href="#plus"/></svg></button></span><svg class="ico"><use href="#hist"/></svg>History</li>
   <li><span class="stem"><button class="exp" aria-label="Expand"><svg><use href="#plus"/></svg></button></span><svg class="ico"><use href="#anno"/></svg>Annotations</li>
   <li><span class="stem"></span><svg class="ico"><use href="#mat"/></svg>Material &lt;not specified&gt;</li>
   <li><span class="stem"></span><svg class="ico"><use href="#dplane"/></svg>Front Plane</li>
   <li><span class="stem"></span><svg class="ico"><use href="#dplane"/></svg>Top Plane</li>
   <li><span class="stem"></span><svg class="ico"><use href="#dplane"/></svg>Right Plane</li>
   <li><span class="stem"></span><svg class="ico"><use href="#orig"/></svg>Origin</li>
   <li><span class="stem"><button class="exp" aria-label="Expand"><svg><use href="#plus"/></svg></button></span><svg class="ico"><use href="#tsweep"/></svg>Sweep1</li>
   <li><span class="stem"></span><svg class="ico"><use href="#plane"/></svg>Plane1</li>
   <li><span class="stem"><button class="exp" aria-label="Expand"><svg><use href="#plus"/></svg></button></span><svg class="ico"><use href="#textr"/></svg>Boss-Extrude1</li>
   <li><span class="stem"><button class="exp" aria-label="Expand"><svg><use href="#plus"/></svg></button></span><svg class="ico"><use href="#tcut"/></svg>Cut-Extrude1</li>
   <li><span class="stem"><button class="exp" aria-label="Expand"><svg><use href="#plus"/></svg></button></span><svg class="ico"><use href="#textr"/></svg>Boss-Extrude3</li>
   <li><span class="stem"><button class="exp" aria-label="Expand"><svg><use href="#plus"/></svg></button></span><svg class="ico"><use href="#textr"/></svg>Boss-Extrude4</li>
   <li><span class="stem"></span><svg class="ico"><use href="#tfil"/></svg>Fillet1</li>
   <li><span class="stem"></span><svg class="ico"><use href="#tfil"/></svg>Fillet2</li>
   <li><span class="stem"></span><svg class="ico"><use href="#plane"/></svg>PlaneLatchBase</li>
   <li><span class="stem"></span><svg class="ico"><use href="#plane"/></svg>PlaneLatchMirror</li>
   <li><span class="stem"></span><svg class="ico"><use href="#tsk"/></svg>(-) Sketch9</li>
   <li><span class="stem"></span><svg class="ico"><use href="#split"/></svg>Split1</li>
   <li><span class="stem"><button class="exp" aria-label="Collapse"><svg><use href="#minus"/></svg></button></span><svg class="ico"><use href="#textr"/></svg>Boss-Extrude5</li>
   <li><span class="stem pass"></span><span class="stem deep"></span><svg class="ico"><use href="#tsk2"/></svg>Sketch10</li>
   <li><span class="stem"><button class="exp" aria-label="Expand"><svg><use href="#plus"/></svg></button></span><svg class="ico"><use href="#textr"/></svg>Boss-Extrude6</li>
   <li><span class="stem"></span><svg class="ico"><use href="#plane"/></svg>PlaneLatch</li>
   <li><span class="stem"><button class="exp" aria-label="Expand"><svg><use href="#plus"/></svg></button></span><svg class="ico"><use href="#textr"/></svg>Boss-Extrude7</li>
   <li><span class="stem"></span><svg class="ico"><use href="#tfil"/></svg>Fillet3</li>
   <li><span class="stem end"></span><svg class="ico"><use href="#tmir"/></svg>Mirror1</li>
  </ul>
  <div class="rollback"></div>
 </aside>

 <section class="viewport flex-grow-1 d-flex" aria-label="Model view">
  <button class="flyout" aria-label="Collapse panel"><i></i><i></i><i></i></button>
  <svg class="model" viewBox="274 181 686 752" role="img" aria-label="Part T608-211" fill="none" stroke="#15161c" stroke-width="1.200" stroke-linejoin="round">
   <defs>
    <linearGradient id="mc" gradientUnits="userSpaceOnUse" x1="607" x2="894"><stop stop-color="#818597"/><stop offset=".25" stop-color="#737686"/><stop offset=".5" stop-color="#656875"/><stop offset=".6" stop-color="#6d707f"/><stop offset=".8" stop-color="#7d8295"/><stop offset="1" stop-color="#858ba0"/></linearGradient>
    <linearGradient id="ml" gradientUnits="userSpaceOnUse" x1="331" x2="448"><stop stop-color="#808498"/><stop offset=".5" stop-color="#757889"/><stop offset="1" stop-color="#666977"/></linearGradient>
    <linearGradient id="mr" gradientUnits="userSpaceOnUse" x1="759" x2="860"><stop stop-color="#6e7180"/><stop offset=".5" stop-color="#7c8194"/><stop offset="1" stop-color="#868ca1"/></linearGradient>
    <linearGradient id="mt" x2="0" y2="1"><stop stop-color="#8e92a6"/><stop offset=".55" stop-color="#9498ad"/><stop offset="1" stop-color="#777a8b"/></linearGradient>
    <linearGradient id="mf" gradientUnits="userSpaceOnUse" y1="590" y2="615" x2="0"><stop stop-color="#989cb1"/><stop offset=".6" stop-color="#8d91a5"/><stop offset="1" stop-color="#6c6f7e"/></linearGradient>
    <linearGradient id="mh" gradientUnits="userSpaceOnUse" x1="636" x2="865"><stop stop-color="#8b8fa4"/><stop offset=".55" stop-color="#676a77"/><stop offset="1" stop-color="#7d8193"/></linearGradient>
    <linearGradient id="ms" x2="1"><stop stop-color="#666977"/><stop offset=".5" stop-color="#80849a"/><stop offset="1" stop-color="#6a6d7b"/></linearGradient>
    <radialGradient id="hl"><stop stop-color="#adb1c4" stop-opacity=".9"/><stop offset="1" stop-color="#9ca0b5" stop-opacity="0"/></radialGradient>
   </defs>
   <!-- base block -->
   <path d="M331.500 595V832Q331 850 420 853L448 853.500 759 849.500Q858 846 860.500 826V772L661 600z" fill="#666977"/>
   <path d="M331.500 598V829Q345 842 420 843.500H448V600z" fill="url(#ml)" stroke="none"/>
   <path d="M759.500 783Q830 781 860.500 772V826Q850 839 759.500 842z" fill="url(#mr)" stroke="none"/>
   <path d="M331.500 829Q350 842 420 843.500L448 843.500 759 841Q845 838 860.500 825Q862 846 759 849.500L448 853.500 420 853Q331 850 331.500 829z" fill="url(#ml)"/>
   <path d="M448 843.500L759 841V849.500L448 853.500z" fill="#707382"/>
   <path d="M331.500 601V595Q333 567 430 564.500L612 562 640 590 662 613 448 615.500 420 615.500Q345 613 331.500 601z" fill="url(#mf)"/>
   <ellipse cx="382" cy="601" rx="30" ry="9" fill="url(#hl)" stroke="none"/>
   <path d="M353 578Q360 566 430 564.500L606 562.500Q586 568 585.500 574 588 582 618 588.500L448 591 420 591Q356 589 353 578z" fill="#969ab0"/>
   <path d="M447.500 591Q449 603 448.500 620V853.500M759.500 783V849.500"/>
   <!-- vertical tube -->
   <path d="M607.500 297V554Q618 563 635 564.500 672 585 673.500 613V771L700 781Q830 785 862 773 894 768 894.500 753V297z" fill="url(#mc)" stroke="none"/>
   <path d="M607.500 297V554M894.500 297V753"/>
   <path d="M607.500 298V290Q610 274 640 266 680 258 751 258.500 820 258 862 266 892 274 894 290V298A143.500 21 0 0 1 607.500 298z" fill="url(#mt)"/>
   <ellipse cx="690" cy="305" rx="50" ry="9" fill="url(#hl)" stroke="none"/>
   <ellipse cx="818" cy="303" rx="45" ry="9" fill="url(#hl)" stroke="none"/>
   <ellipse cx="751" cy="276" rx="121" ry="18" fill="#8b8fa3"/>
   <ellipse cx="750.500" cy="276" rx="114.500" ry="17" fill="url(#mh)"/>
   <!-- blend between tube and base -->
   <path d="M607.500 554Q618 563 635 564.500 672 585 673.500 613V772L659.500 769V613Q656 596 618 588.500 588 582 585.500 574 587 566 602 563.500 606 561 607.500 554z" fill="#8b8fa4"/>
   <path d="M660 613H673V772L660 769z" fill="url(#ms)"/>
   <ellipse cx="645" cy="583" rx="20" ry="8" fill="url(#hl)" stroke="none" transform="rotate(35 645 583)"/>
   <path d="M635 564.500Q634 584 618 588.500"/>
   <!-- lower rim -->
   <path d="M672 770Q680 774 765 773 870 770 894.500 752 892 769 862 774 820 783 760 783 700 784 673 775z" fill="#757888"/>
   <path d="M659.500 769Q672 780 705 782.500 730 784 760 783 830 782 860 774.500 830 789 760 790L705 790.500Q674 790 659.500 769zM705 782.500V790.500M673 775L668 779" fill="#6c6f7e"/>
   <!-- upper latch -->
   <path d="M672.500 336L677 331.500 762 334 763.500 338V361H761.500V487L675 487.500 672.500 484z" fill="#666977"/>
   <path d="M673 337L677 332 762 334.500 763.500 344H677.500z" fill="#8f93a7"/>
   <path d="M680 338.500Q720 338 763 338M677 332l3.500 7L677 344M677 344V361.500H763.500V344z"/>
   <path d="M675 362H679V487H675z" fill="#8a8ea2"/>
   <path d="M696 392L699 391H740V452L719.500 455 698 455.500 696 452z" fill="#666977"/>
   <path d="M719.500 395L740 391V452L719.500 455z" fill="#84879a"/>
   <path d="M697 392L740 391 719.500 395H698z" fill="#9195aa"/><path d="M698 395V455"/>
   <!-- lower latch -->
   <path d="M661 613L674 614.500 761.500 617.500V748.500L764.500 751V772L678 771.500 674 764V616" fill="#666977"/>
   <path d="M674.500 615.500L761.500 617.500 679.500 618V748H675z" fill="#8a8ea2"/>
   <path d="M679.500 618H761.500V748.500H679.500z" fill="#666977"/>
   <path d="M675 748.500H763L764.500 752H677.500z" fill="#9094a8"/>
   <path d="M677.500 752H764.500V770H677.500z" fill="#666977"/>
   <path d="M696.500 652.500L740.500 651.500V712L720 716.500H698L696.500 713z" fill="#666977"/>
   <path d="M720 656L740.500 652V712L720 716z" fill="#84879a"/>
   <path d="M697 652.500L740.500 652 720 656H698z" fill="#9195aa"/><path d="M698 656V716"/>
  </svg>
 </section>
</main>
</div>
</body>
</html>
